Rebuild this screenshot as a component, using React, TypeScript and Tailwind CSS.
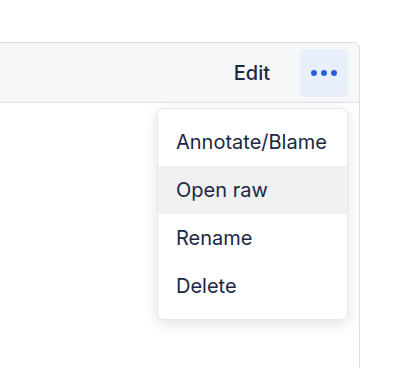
import { useState } from 'react';

const items = ['Annotate/Blame', 'Open raw', 'Rename', 'Delete'];

export default function App() {
  const [hovered] = useState(1);

  return (
    <div className="w-[402px] h-[368px] bg-white overflow-hidden" style={{ fontFamily: 'Inter, "Noto Sans", sans-serif' }}>
      <div className="relative mt-[42px] ml-[-20px] w-[380px] h-[340px] border border-[#dcdfe4] rounded-tr-md bg-white">
        <div className="h-[60px] flex items-center justify-end gap-[30px] pr-[11px] bg-[#f6f7f9] border-b border-[#dcdfe4] rounded-tr-md">
          <button className="text-[20px] font-medium text-[#1c2744] leading-none">Edit</button>
          <button className="w-[48px] h-[48px] rounded-[5px] bg-[#e9f0fc] flex items-center justify-center gap-[4px]">
            <span className="w-[6px] h-[6px] rounded-full bg-[#2a62dd]" />
            <span className="w-[6px] h-[6px] rounded-full bg-[#2a62dd]" />
            <span className="w-[6px] h-[6px] rounded-full bg-[#2a62dd]" />
          </button>
        </div>

        <div className="absolute top-[65px] right-[11px] w-[191px] py-[9px] bg-white border border-[#e6e8eb] rounded-md shadow-[0_4px_14px_rgba(15,23,42,0.12)]">
          {items.map((label, i) => (
            <div
              key={label}
              className={`h-[48px] flex items-center px-[18px] text-[20px] text-[#1c2744] ${i === hovered ? 'bg-[#f0f1f3]' : ''}`}
            >
              {label}
            </div>
          ))}
        </div>
      </div>
    </div>
  );
}
